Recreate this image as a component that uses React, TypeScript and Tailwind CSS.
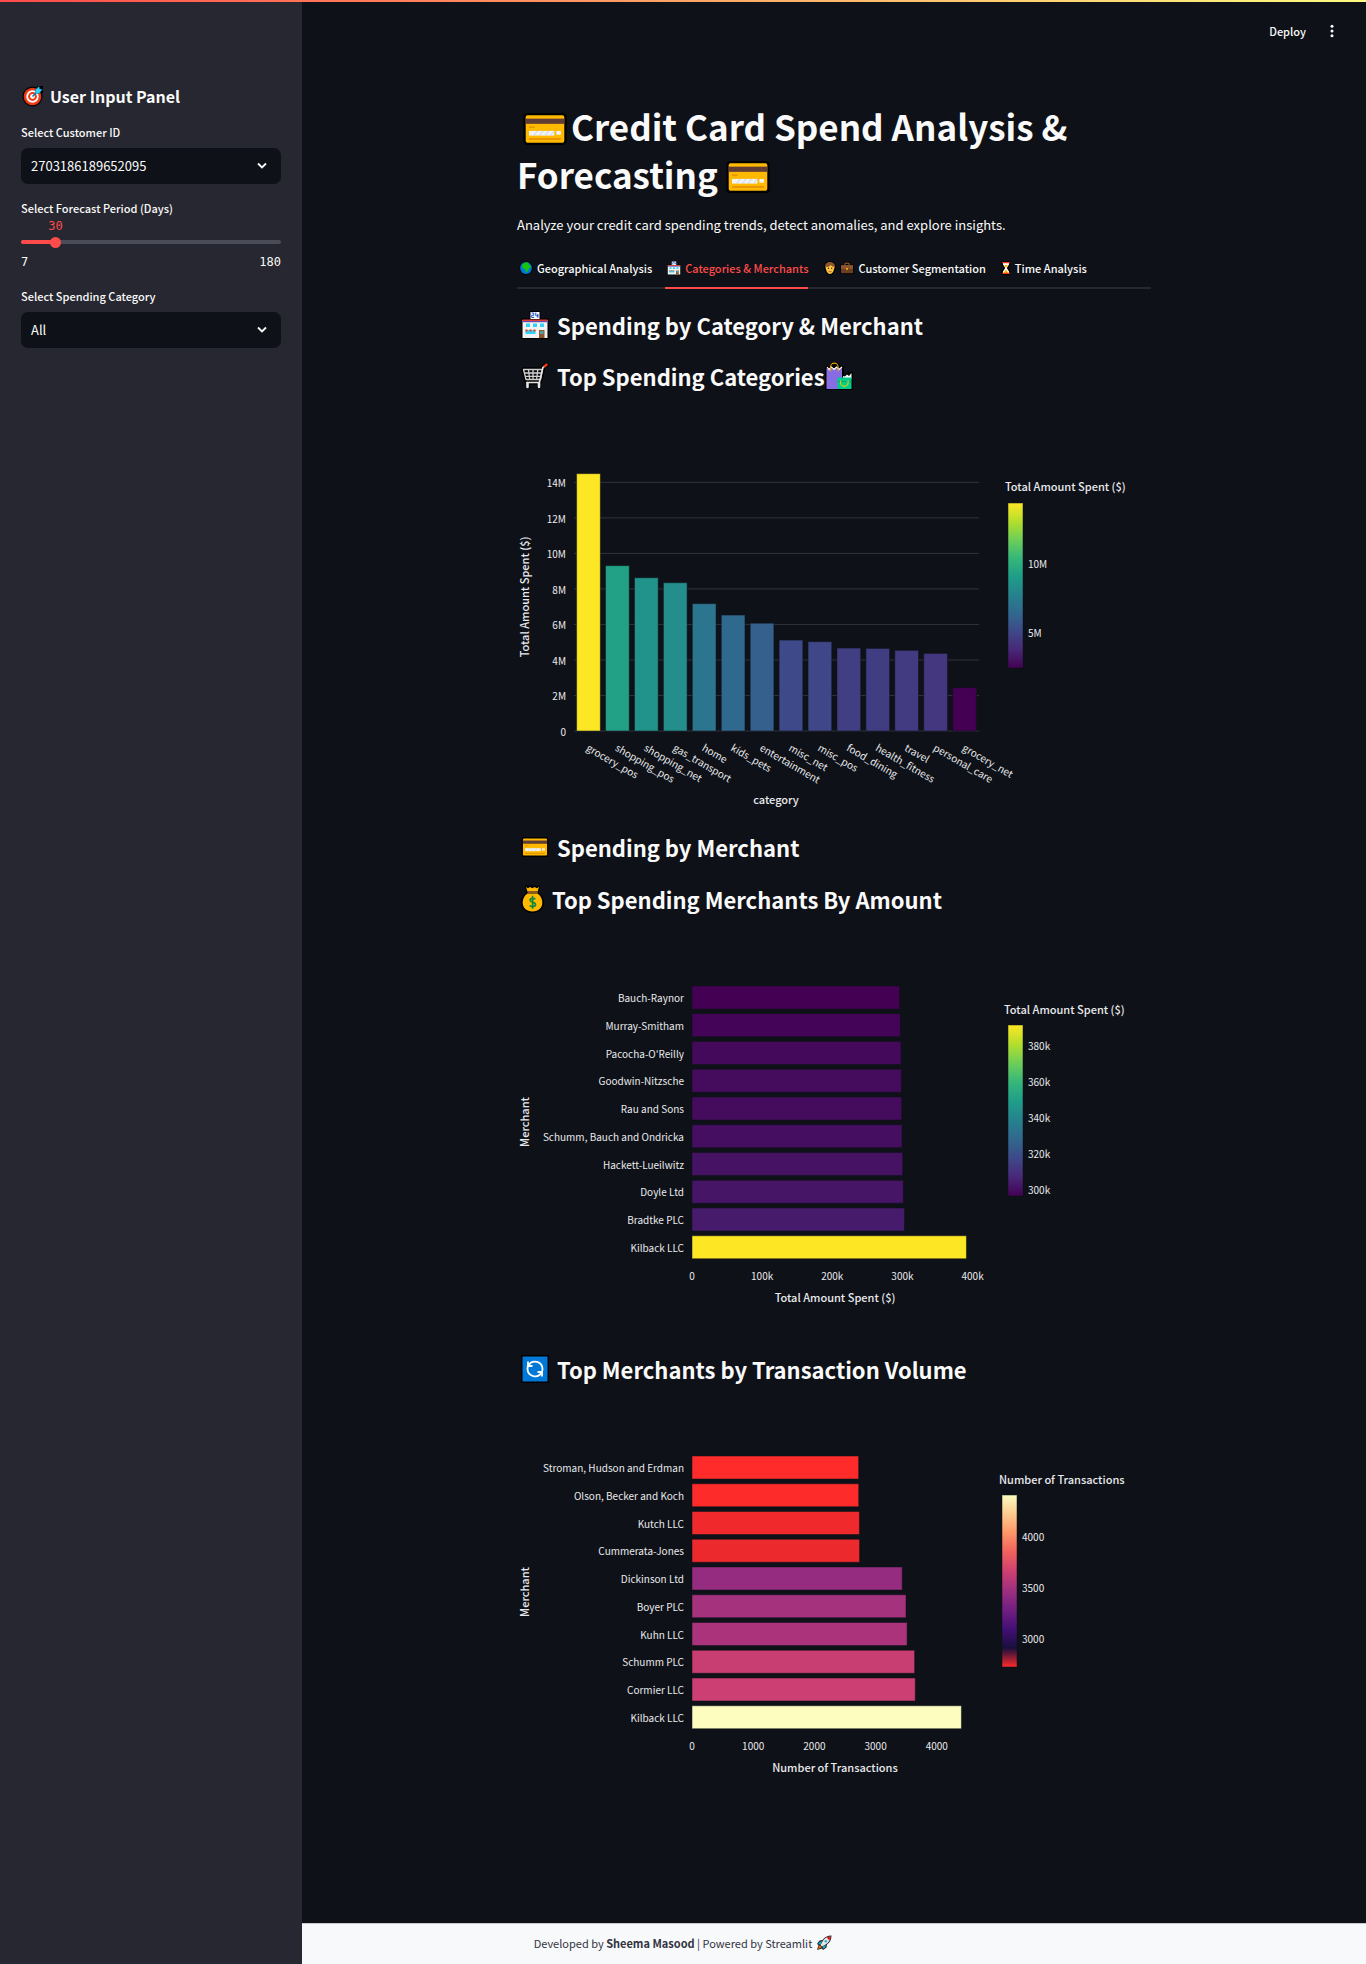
import { useState, type ReactNode } from "react";

const VIRIDIS = ["#440154", "#482878", "#3e4989", "#31688e", "#26828e", "#1f9e89", "#35b779", "#6ece58", "#b5de2b", "#fde725"];
const MAGMA = ["#ff2b2b", "#180f3d", "#440f76", "#721f81", "#9e2f7f", "#cd4071", "#f1605d", "#fd9668", "#feca8d", "#fcfdbf"];

function scaleColor(scale: string[], t: number) {
  const pos = Math.min(Math.max(t, 0), 1) * (scale.length - 1);
  const i = Math.min(Math.floor(pos), scale.length - 2);
  const f = pos - i;
  const channel = (hex: string, n: number) => parseInt(hex.slice(1 + n * 2, 3 + n * 2), 16);
  const mix = [0, 1, 2].map((n) => Math.round(channel(scale[i], n) * (1 - f) + channel(scale[i + 1], n) * f));
  return `rgb(${mix.join(",")})`;
}

/* ---------- Emoji drawings ---------- */

function Card({ className }: { className?: string }) {
  return (
    <svg viewBox="0 0 46 34" className={className} aria-hidden="true">
      <rect x="0" y="0" width="46" height="34" rx="4" fill="#000" />
      <rect x="2.5" y="2.5" width="41" height="29" rx="2" fill="#ffb900" />
      <rect x="2.5" y="6" width="41" height="5.5" fill="#5f3c34" />
      <rect x="6" y="14.5" width="6" height="1" fill="#d67f00" />
      <rect x="6" y="19" width="27" height="5" fill="#f2f2f2" />
      <path d="M11 24l4-5M17 24l4-5M23 24l4-5M29 24l4-5" stroke="#b9d3ea" strokeWidth="1" />
      <rect x="35" y="19" width="5" height="4" rx="1" fill="#f2f2f2" />
      <rect x="6" y="27" width="34" height="1.2" fill="#d67f00" />
    </svg>
  );
}

function Target() {
  return (
    <svg viewBox="0 0 22 22" className="size-[22px]" aria-hidden="true">
      <circle cx="10.5" cy="11.5" r="10" fill="#000" />
      <path d="M14 6l1-5h6v7l-5 2z" fill="#000" />
      <circle cx="10.5" cy="11.5" r="8.8" fill="#f03a17" />
      <circle cx="10.5" cy="11.5" r="6.2" fill="#fff" />
      <circle cx="10.5" cy="11.5" r="4.4" fill="#f03a17" />
      <circle cx="10.5" cy="11.5" r="2.4" fill="#fff" />
      <path d="M10.5 11.5l6-6" stroke="#0078a8" strokeWidth="1.4" />
      <path d="M13.5 8.5l-.3-3.6L17 1.4l.7 2.6 2.6.6-3.4 3.9z" fill="#31d2f7" stroke="#0078a8" strokeWidth=".6" />
    </svg>
  );
}

function Globe() {
  return (
    <svg viewBox="0 0 14 14" className="size-[14px]" aria-hidden="true">
      <circle cx="7" cy="7" r="6.6" fill="#000" />
      <circle cx="7" cy="7" r="5.9" fill="#0078d7" />
      <path d="M3.5 3.2C5 1.6 8 1 9.8 2l-.6 1.4 2 .8 1 2.2-1.8.4L9 9.5 7.6 11.6 6.5 10.5 6.3 8 4 7.4 3 5.6z" fill="#16c60c" />
    </svg>
  );
}

function Store({ className }: { className?: string }) {
  return (
    <svg viewBox="0 0 28 28" className={className} aria-hidden="true">
      <path d="M8.5 0h11v7.500H27.500V28H.5V7.500h8z" fill="#000" />
      <rect x="9.5" y="1" width="9" height="7" fill="#fff" />
      <path d="M10.500 2h2.300v2.300h-2.100v2.200h2.500M14.800 1.500v3.300h2.900M16.800 2.800v4.100" stroke="#1a4fd0" strokeWidth="1" fill="none" />
      <rect x="1.5" y="9" width="25" height="18" fill="#f2f2f2" />
      <rect x="1.5" y="8.500" width="25" height="1.500" fill="#e03c31" />
      <rect x="1.5" y="10" width="25" height="1.200" fill="#5b4bb5" />
      <path d="M5 12.500h4v3.500H5zM12 12.500h4v3.500h-4zM19 12.500h4v3.500h-4zM4.500 19h10v4h-10z" fill="#31d2f7" />
      <path d="M4.500 18.500h2v2h-2zM8.500 18.500h2v2h-2zM12.500 18.500h2v2h-2z" fill="#f03a17" />
      <rect x="18" y="19" width="5.5" height="8" fill="#8e562e" />
      <rect x="19" y="20" width="3.5" height="3" fill="#4fa3a5" />
    </svg>
  );
}

function Cart() {
  return (
    <svg viewBox="0 0 28 28" className="size-7" aria-hidden="true">
      <g fill="none" strokeLinejoin="round" strokeLinecap="round">
        <path d="M25.500 3l-3 1.500-4 16H6M2.500 7.500h19l-2 10H5zM7 24.500h0M18 24.500h0" stroke="#000" strokeWidth="4.5" />
        <path d="M2.500 7.500h19l-2 10H5zM3.500 11h17.200M4.300 14.300H20M7.500 7.500l1.200 10M12 7.500v10M16.800 7.500l-1.200 10" stroke="#cfcfcf" strokeWidth="1.3" />
        <path d="M24 3.800l-2 1.500-3.600 15.200H6" stroke="#e6e6e6" strokeWidth="1.6" />
        <path d="M25.500 2.600l-1.800 1.600" stroke="#f03a17" strokeWidth="2.6" />
        <path d="M6.500 21v4M18 21v4" stroke="#e6e6e6" strokeWidth="2.6" />
      </g>
    </svg>
  );
}

function Bags() {
  return (
    <svg viewBox="0 0 28 28" className="size-7" aria-hidden="true">
      <path d="M0 4h5l3-4h4l4 4h3v10l4-4h5v18H0z" fill="#000" />
      <path d="M1.500 6l2 1.500L6 5.500l2.500 2 2.500-2 2.500 2 3.500-1.500V27H1.500z" fill="#886ce4" />
      <path d="M2 5l2 2.500L6.500 5l2.500 2.500L11.500 5 14 7.500 17 5" stroke="#fff" strokeWidth="1.2" fill="none" />
      <path d="M5.500 9.500V5a3.800 3.800 0 0 1 7.600 0v4.500" stroke="#e6a700" strokeWidth="1.2" fill="none" />
      <path d="M18 14l2 .5 2-2 2 1.500 2.500-3V17H18z" fill="#fff" />
      <rect x="12.5" y="15.500" width="14" height="11.500" fill="#00cc8e" />
      <path d="M12.500 19.500h14" stroke="#00a86f" strokeWidth="1" />
      <path d="M15.500 18.500v2a3.800 3.800 0 0 0 7.600 0v-2" stroke="#e6c700" strokeWidth="1.2" fill="none" />
    </svg>
  );
}

function MoneyBag() {
  return (
    <svg viewBox="0 0 23 28" className="h-7 w-[23px]" aria-hidden="true">
      <path d="M4 .5h15l-1 7.500c3 2 5 5.500 5 9.500 0 6-4 10.500-11.500 10.500S0 23.500 0 17.500C0 13.500 2 10 5 8z" fill="#000" />
      <path d="M5 2l2 1.200L9 2l2.300 1.200L13.600 2l2.200 1.200L18 2l-1.400 4.500H6.500z" fill="#ffb900" />
      <rect x="6.5" y="6.300" width="10.200" height="1.800" fill="#8e562e" />
      <path d="M6.500 8.500h10c3 2 4.800 5.200 4.800 9 0 5.500-3.800 9-9.800 9s-9.800-3.500-9.800-9c0-3.800 1.800-7 4.800-9z" fill="#ffb900" />
      <path d="M14.300 14.200c-.8-1-5.200-1.600-5.200.9 0 2.600 5.400 1.600 5.400 4.500 0 2.600-4.700 2.400-5.800.9M11.600 10.800v13" stroke="#10893e" strokeWidth="1.7" fill="none" />
    </svg>
  );
}

function Refresh() {
  return (
    <svg viewBox="0 0 28 28" className="size-7" aria-hidden="true">
      <rect width="28" height="28" fill="#000" />
      <rect x="1.5" y="1.500" width="25" height="25" fill="#0078d7" />
      <g stroke="#fff" strokeWidth="1.8" fill="none">
        <path d="M7.500 10.500a7.500 7.500 0 0 1 14 3.500c0 1.500-.4 2.800-1 4" />
        <path d="M20.500 17.500a7.500 7.500 0 0 1-14-3.500c0-1.500.4-2.800 1-4" />
        <path d="M7 6.500v4.500h4.500M21 21.500v-4.500h-4.500" />
      </g>
    </svg>
  );
}

function Person() {
  return (
    <svg viewBox="0 0 14 14" className="size-[14px]" aria-hidden="true">
      <path d="M7 .2c4 0 6 2.800 5.800 6.300C12.600 10.800 10 14 7 14S1.400 10.800 1.200 6.500C1 3 3 .2 7 .2z" fill="#000" />
      <path d="M7 1c3.500 0 5.200 2.300 5 5.300L11.500 8h-9L2 6.300C1.800 3.300 3.500 1 7 1z" fill="#8e562e" />
      <path d="M3 6.200c2 0 3.800-.8 4.800-2.200.8 1.200 2 1.800 3.300 2C11.300 10 9.500 12.900 7 12.900S2.800 10 3 6.200z" fill="#ffc83d" />
      <path d="M4.900 7.300h1.200M8.100 7.300h1.200" stroke="#000" strokeWidth="1.100" />
      <path d="M5.500 10.200c1 .8 2 .8 3 0" stroke="#a4262c" strokeWidth=".8" fill="none" />
    </svg>
  );
}

function Briefcase() {
  return (
    <svg viewBox="0 0 14 14" className="size-[14px]" aria-hidden="true">
      <path d="M4 1h6v2.500h3.700V13H.3V3.500H4z" fill="#000" />
      <path d="M5 4V2.200h4V4" stroke="#a56a3a" strokeWidth="1" fill="none" />
      <rect x="1" y="4.200" width="12" height="8" fill="#6b3f22" />
      <rect x="1" y="4.200" width="12" height="3.600" fill="#8e562e" />
      <rect x="6.200" y="7" width="1.600" height="1.800" fill="#ffb900" />
    </svg>
  );
}

function Hourglass() {
  return (
    <svg viewBox="0 0 10 14" className="h-[14px] w-[10px]" aria-hidden="true">
      <path d="M.5 .3h9v3.500L7 7l2.500 3.200v3.500h-9v-3.500L3 7 .5 3.800z" fill="#000" />
      <path d="M2 2h6v1.500L5.800 7 8 10.500V12H2v-1.500L4.200 7 2 3.500z" fill="#fff" />
      <path d="M3 4h4L5 7zM5 8.500l2.300 3.500H2.700z" fill="#ffb900" />
      <path d="M1.200 .9h7.600v1.300H1.200zM1.200 11.800h7.600v1.300H1.200z" fill="#f03a17" />
    </svg>
  );
}

function Rocket() {
  return (
    <svg viewBox="0 0 16 16" className="size-4" aria-hidden="true">
      <path d="M15.500.5c-4 0-7 1.500-9 4.500l-3 .5L1 9l1.500 1L1 15l5-1.500L7 15l3.500-2.500.5-3c3-2 4.500-5 4.500-9z" fill="#222" />
      <path d="M14.500 1.500C11 2 8.500 3 6.800 6L4.500 10l1.500 1.500 4-2.300C13 7.500 14 5 14.500 1.500z" fill="#e6e6e6" />
      <path d="M14.500 1.500c-1.500.2-2.800.5-3.900 1.100l2.800 2.800c.6-1.100 1-2.400 1.100-3.900z" fill="#e81224" />
      <path d="M6 6.200l-2.200.5L2.300 9l2.200.6zM9.800 10l-.4 2.200L7.200 13.700l-.7-2.200z" fill="#0fb5d5" />
      <circle cx="9.800" cy="6.300" r="1.300" fill="#31b2d2" />
      <path d="M3.800 10.300c-1 .8-1.500 2-1.800 3.600 1.600-.2 2.900-.8 3.700-1.800z" fill="#f7630c" />
    </svg>
  );
}

/* ---------- Charts ---------- */

type LegendProps = { id: string; title: string; titleX: number; x: number; y: number; height: number; scale: string[]; ticks: [string, number][] };

function ColorLegend({ id, title, titleX, x, y, height, scale, ticks }: LegendProps) {
  return (
    <g>
      <defs>
        <linearGradient id={id} x1="0" y1="1" x2="0" y2="0">
          {scale.map((c, i) => (
            <stop key={c} offset={i / (scale.length - 1)} stopColor={c} />
          ))}
        </linearGradient>
      </defs>
      <text x={titleX} y="99" className="fill-[#e9eaed] text-[11px] font-medium">{title}</text>
      <rect x={x} y={y} width="15" height={height} fill={`url(#${id})`} stroke="#0e1117" strokeOpacity=".5" />
      {ticks.map(([label, ty]) => (
        <text key={label} x={x + 20} y={ty + 4} className="fill-[#e9eaed] text-[10px]">{label}</text>
      ))}
    </g>
  );
}

const CATEGORIES: [string, number][] = [
  ["grocery_pos", 14.49], ["shopping_pos", 9.31], ["shopping_net", 8.63], ["gas_transport", 8.35], ["home", 7.17],
  ["kids_pets", 6.53], ["entertainment", 6.07], ["misc_net", 5.12], ["misc_pos", 5.03], ["food_dining", 4.67],
  ["health_fitness", 4.65], ["travel", 4.54], ["personal_care", 4.37], ["grocery_net", 2.44],
];

function CategoryChart() {
  const zero = 339;
  const perMillion = 17.76;
  const step = 405 / CATEGORIES.length;
  return (
    <svg viewBox="0 0 634 439" className="block w-full overflow-visible" role="img" aria-label="Total amount spent by category">
      {[0, 2, 4, 6, 8, 10, 12, 14].map((m) => {
        const y = zero - m * perMillion;
        return (
          <g key={m}>
            <line x1="57" x2="462" y1={y} y2={y} stroke="#31333f" strokeWidth="1" />
            <text x="49" y={y + 5} textAnchor="end" className="fill-[#e9eaed] text-[10px]">{m === 0 ? "0" : `${m}M`}</text>
          </g>
        );
      })}
      {CATEGORIES.map(([name, value], i) => {
        const x = 57 + step * i;
        const h = value * perMillion;
        return (
          <g key={name}>
            <rect x={x + step * 0.09} y={zero - h} width={step * 0.82} height={h} fill={scaleColor(VIRIDIS, (value - 2.44) / 12.05)} stroke="#0e1117" strokeOpacity=".5" />
            <text transform={`translate(${x + step / 2 - 3} ${zero + 19}) rotate(30)`} className="fill-[#e9eaed] text-[10px]">{name}</text>
          </g>
        );
      })}
      <text transform="translate(12 205) rotate(-90)" textAnchor="middle" className="fill-[#e9eaed] text-[11px] font-medium">Total Amount Spent ($)</text>
      <text x="259" y="412" textAnchor="middle" className="fill-[#e9eaed] text-[11px] font-medium">category</text>
      <ColorLegend id="legend-category" title="Total Amount Spent ($)" titleX={488} x={491} y={111} height={165} scale={VIRIDIS} ticks={[["10M", 172], ["5M", 241]]} />
    </svg>
  );
}

type MerchantChartProps = {
  label: string; rows: [string, number][]; perUnit: number; axis: [string, number][]; axisTitle: string; scale: string[]; legend: ReactNode;
};

function MerchantChart({ label, rows, perUnit, axis, axisTitle, scale, legend }: MerchantChartProps) {
  const left = 175;
  const values = rows.map((r) => r[1]);
  const min = Math.min(...values);
  const max = Math.max(...values);
  return (
    <svg viewBox="0 0 634 438" className="block w-full overflow-visible" role="img" aria-label={label}>
      {rows.map(([name, value], i) => {
        const y = 71 + i * 27.75;
        return (
          <g key={name}>
            <rect x={left} y={y} width={value * perUnit} height="23" fill={scaleColor(scale, (value - min) / (max - min))} stroke="#0e1117" strokeOpacity=".5" />
            <text x="167" y={y + 16} textAnchor="end" className="fill-[#e9eaed] text-[10px]">{name}</text>
          </g>
        );
      })}
      {axis.map(([tick, v]) => (
        <text key={tick} x={left + v * perUnit} y="365" textAnchor="middle" className="fill-[#e9eaed] text-[10px]">{tick}</text>
      ))}
      <text x="318" y="387" textAnchor="middle" className="fill-[#e9eaed] text-[11px] font-medium">{axisTitle}</text>
      <text transform="translate(12 207) rotate(-90)" textAnchor="middle" className="fill-[#e9eaed] text-[11px] font-medium">Merchant</text>
      {legend}
    </svg>
  );
}

const BY_AMOUNT: [string, number][] = [
  ["Bauch-Raynor", 295.8], ["Murray-Smitham", 296.9], ["Pacocha-O'Reilly", 297.9], ["Goodwin-Nitzsche", 298.4], ["Rau and Sons", 298.8],
  ["Schumm, Bauch and Ondricka", 299.4], ["Hackett-Lueilwitz", 300.4], ["Doyle Ltd", 301.2], ["Bradtke PLC", 302.9], ["Kilback LLC", 391.2],
];

const BY_VOLUME: [string, number][] = [
  ["Stroman, Hudson and Erdman", 2723], ["Olson, Becker and Koch", 2724], ["Kutch LLC", 2736], ["Cummerata-Jones", 2738], ["Dickinson Ltd", 3435],
  ["Boyer PLC", 3497], ["Kuhn LLC", 3515], ["Schumm PLC", 3638], ["Cormier LLC", 3648], ["Kilback LLC", 4402],
];

/* ---------- Page parts ---------- */

function Heading({ icon, children, after }: { icon: ReactNode; children: ReactNode; after?: ReactNode }) {
  return (
    <h2 className="flex h-8 items-center pl-1 text-[22px] leading-8 font-bold">
      {icon}
      <span className="ml-2">{children}</span>
      {after}
    </h2>
  );
}

function SelectField({ id, label, options }: { id: string; label: string; options: string[] }) {
  return (
    <div>
      <label htmlFor={id} className="block text-[11px] leading-5 font-medium">{label}</label>
      <div className="relative mt-1.5">
        <select id={id} className="block h-9 w-full appearance-none rounded-[7px] bg-[#0e1117] pr-9 pl-2.5 text-[13px] text-[#fafafa] outline-none">
          {options.map((o) => (
            <option key={o}>{o}</option>
          ))}
        </select>
        <svg viewBox="0 0 10 8" className="pointer-events-none absolute top-[14px] right-[14px] h-2 w-2.5" aria-hidden="true">
          <path d="M1 1.500l4 4 4-4" fill="none" stroke="#fafafa" strokeWidth="1.8" />
        </svg>
      </div>
    </div>
  );
}

function ForecastSlider() {
  const [days, setDays] = useState(30);
  const percent = ((days - 7) / 173) * 100;
  return (
    <div>
      <label htmlFor="days" className="block text-[11px] leading-5 font-medium">Select Forecast Period (Days)</label>
      <div className="h-4 font-['DejaVu_Sans_Mono',monospace] text-xs leading-4 text-[#ff4b4b]" style={{ paddingLeft: `${percent}%` }}>
        <output htmlFor="days" className="inline-block -translate-x-1/2">{days}</output>
      </div>
      <div className="relative flex h-4 items-center">
        <div className="h-1 w-full overflow-hidden rounded-full bg-[#4a4c57]">
          <div className="h-full bg-[#ff4b4b]" style={{ width: `${percent}%` }} />
        </div>
        <input
          id="days"
          type="range"
          min={7}
          max={180}
          value={days}
          onChange={(e) => setDays(Number(e.target.value))}
          className="absolute -inset-x-[5px] h-4 appearance-none bg-transparent outline-none [&::-webkit-slider-thumb]:size-[11px] [&::-webkit-slider-thumb]:appearance-none [&::-webkit-slider-thumb]:rounded-full [&::-webkit-slider-thumb]:bg-[#ff4b4b]"
        />
      </div>
      <div className="mt-0.5 flex justify-between font-['DejaVu_Sans_Mono',monospace] text-xs leading-5">
        <span>7</span>
        <span>180</span>
      </div>
    </div>
  );
}

const TABS: { label: string; icon: ReactNode }[] = [
  { label: "Geographical Analysis", icon: <Globe /> },
  { label: "Categories & Merchants", icon: <Store className="size-[14px]" /> },
  { label: "Customer Segmentation", icon: <span className="flex gap-[3px]"><Person /><Briefcase /></span> },
  { label: "Time Analysis", icon: <Hourglass /> },
];

export default function App() {
  return (
    <div className="relative flex min-h-screen bg-[#0e1117] font-['Noto_Sans_CJK_SC',sans-serif] text-[#fafafa]">
      <div className="absolute inset-x-0 top-0 z-20 h-0.5 bg-[linear-gradient(90deg,#ff4b4b,#fffd80)]" />

      <aside className="z-10 w-[302px] shrink-0 bg-[#262730] px-[21px] pt-[84px]">
        <h2 className="mb-3.5 flex items-center gap-1.5 pl-px text-base leading-6 font-bold">
          <Target />
          User Input Panel
        </h2>
        <div className="flex flex-col gap-3.5">
          <SelectField id="customer" label="Select Customer ID" options={["2703186189652095"]} />
          <ForecastSlider />
          <SelectField id="category" label="Select Spending Category" options={["All"]} />
        </div>
      </aside>

      <main className="min-w-0 flex-1 pb-[80px]">
        <header className="flex h-[62px] items-center justify-end gap-5 pr-7">
          <button type="button" className="text-[11px] leading-5 font-medium">Deploy</button>
          <button type="button" aria-label="Main menu">
            <svg viewBox="0 0 12 14" className="h-3.5 w-3" aria-hidden="true">
              <g fill="#fafafa">
                <circle cx="6" cy="2.300" r="1.500" />
                <circle cx="6" cy="7" r="1.500" />
                <circle cx="6" cy="11.700" r="1.500" />
              </g>
            </svg>
          </button>
        </header>

        <div className="mx-auto max-w-[634px] pt-10">
          <h1 className="text-[35px] leading-[48px] font-bold">
            <Card className="mr-1 ml-1.5 inline-block h-8 w-11 align-[-4px]" />
            Credit Card Spend Analysis &amp; Forecasting
            <Card className="ml-2 inline-block h-8 w-11 align-[-4px]" />
          </h1>
          <p className="mt-4 text-[13px] leading-[22px]">
            Analyze your credit card spending trends, detect anomalies, and explore insights.
          </p>

          <div role="tablist" className="mt-[17px] flex gap-[13px] border-b-2 border-[#262730]">
            {TABS.map(({ label, icon }, i) => (
              <button
                key={label}
                type="button"
                role="tab"
                aria-selected={i === 1}
                className={
                  i === 1
                    ? "-mb-0.5 flex h-9 items-center gap-1 border-b-2 border-[#ff4b4b] pb-1 pl-0.5 text-[11px] font-medium whitespace-nowrap text-[#ff4b4b]"
                    : "-mb-0.5 flex h-9 items-center gap-1 border-b-2 border-transparent pb-1 pl-0.5 text-[11px] font-medium whitespace-nowrap"
                }
              >
                {icon}
                {label}
              </button>
            ))}
          </div>

          <div className="mt-5 flex flex-col gap-[19px]">
            <Heading icon={<Store className="size-7" />}>Spending by Category &amp; Merchant</Heading>
            <Heading icon={<Cart />} after={<Bags />}>Top Spending Categories</Heading>
          </div>
          <CategoryChart />

          <div className="flex flex-col gap-5">
            <Heading icon={<Card className="h-5 w-7" />}>Spending by Merchant</Heading>
            <Heading icon={<MoneyBag />}>Top Spending Merchants By Amount</Heading>
          </div>
          <MerchantChart
            label="Top spending merchants by amount"
            rows={BY_AMOUNT}
            perUnit={0.7015}
            axis={[["0", 0], ["100k", 100], ["200k", 200], ["300k", 300], ["400k", 400]]}
            axisTitle="Total Amount Spent ($)"
            scale={VIRIDIS}
            legend={
              <ColorLegend id="legend-amount" title="Total Amount Spent ($)" titleX={487} x={491} y={110} height={171} scale={VIRIDIS}
                ticks={[["380k", 131], ["360k", 167], ["340k", 203], ["320k", 239], ["300k", 275]]} />
            }
          />

          <Heading icon={<Refresh />}>Top Merchants by Transaction Volume</Heading>
          <MerchantChart
            label="Top merchants by transaction volume"
            rows={BY_VOLUME}
            perUnit={0.0612}
            axis={[["0", 0], ["1000", 1000], ["2000", 2000], ["3000", 3000], ["4000", 4000]]}
            axisTitle="Number of Transactions"
            scale={MAGMA}
            legend={
              <ColorLegend id="legend-volume" title="Number of Transactions" titleX={482} x={485} y={110} height={172} scale={MAGMA}
                ticks={[["4000", 152], ["3500", 203], ["3000", 254]]} />
            }
          />
        </div>
      </main>

      <footer className="fixed inset-x-0 bottom-0 flex h-[41px] items-center justify-center gap-1 border-t border-[#c8c9ce] bg-[#f8f9fb] pb-0.5 text-[11px] text-[#31333f]">
        <p>
          Developed by <strong className="font-bold">Sheema Masood</strong> | Powered by Streamlit
        </p>
        <Rocket />
      </footer>
    </div>
  );
}
